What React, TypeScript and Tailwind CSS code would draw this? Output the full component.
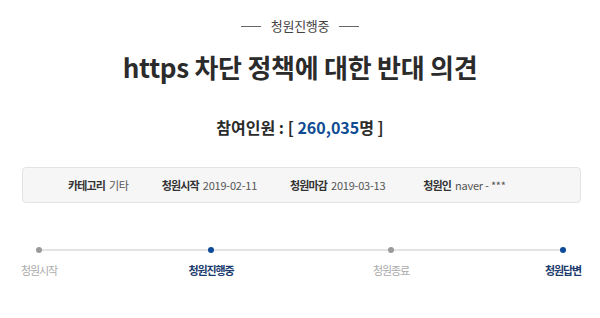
import React from 'react';

const font = { fontFamily: '"Noto Sans CJK KR", "Noto Sans", sans-serif' };

const info = [
  { label: '카테고리', value: '기타' },
  { label: '청원시작', value: '2019-02-11' },
  { label: '청원마감', value: '2019-03-13' },
  { label: '청원인', value: 'naver - ***' },
];

// ml values place the dots at the same x as the reference
const steps = [
  { label: '청원시작', active: false, ml: 'ml-0' },
  { label: '청원진행중', active: true, ml: 'ml-[138px]' },
  { label: '청원종료', active: false, ml: 'ml-[146px]' },
  { label: '청원답변', active: true, ml: 'ml-[138px]' },
];

export default function App() {
  return (
    <div className="w-[600px] h-[318px] bg-white overflow-hidden" style={font}>
      <div className="flex flex-col items-center pt-[17px]">
        <div className="flex items-center gap-[10px] text-[13px] leading-[18px] text-[#444]">
          <span className="w-[20px] h-px bg-[#666]" />
          <span className="tracking-[-0.02em]">청원진행중</span>
          <span className="w-[20px] h-px bg-[#666]" />
        </div>
        <h1 className="mt-[15px] text-[26px] leading-[34px] font-bold text-[#2b2b2b] tracking-[-0.01em]">
          https 차단 정책에 대한 반대 의견
        </h1>
        <p className="mt-[32px] text-[16px] leading-[22px] font-bold text-[#2b2b2b]">
          참여인원 : [ <span className="text-[#0f4c94]">260,035</span>명 ]
        </p>
      </div>

      <div className="ml-[22px] mt-[29px] w-[559px] h-[36px] rounded-[4px] border border-[#e3e3e3] bg-[#f6f6f6] flex items-center pl-[45px] text-[11px]">
        {info.map((it, i) => (
          <div
            key={it.label}
            className={`flex items-center gap-[4px] ${i === 0 ? '' : i === 3 ? 'ml-[38px]' : 'ml-[33px]'}`}
          >
            <span className="font-bold text-[#333] tracking-[-0.08em]">{it.label}</span>
            <span className="text-[#555] tracking-[-0.02em]">{it.value}</span>
          </div>
        ))}
      </div>

      <div className="relative ml-[22px] mt-[44px] w-[561px]">
        <div className="absolute left-[17px] right-[18px] top-[2px] h-[2px] bg-[#e4e4e4]" />
        <div className="relative flex">
          {steps.map((s) => (
            <div key={s.label} className={`w-[34px] flex flex-col items-center ${s.ml}`}>
              <span className={`w-[6px] h-[6px] rounded-full ${s.active ? 'bg-[#0d4a9a]' : 'bg-[#9a9a9a]'}`} />
              <span
                className={`mt-[10px] whitespace-nowrap text-[11px] leading-[14px] tracking-[-0.1em] ${
                  s.active ? 'font-bold text-[#1d3c6e]' : 'text-[#aaa]'
                }`}
              >
                {s.label}
              </span>
            </div>
          ))}
        </div>
      </div>
    </div>
  );
}
